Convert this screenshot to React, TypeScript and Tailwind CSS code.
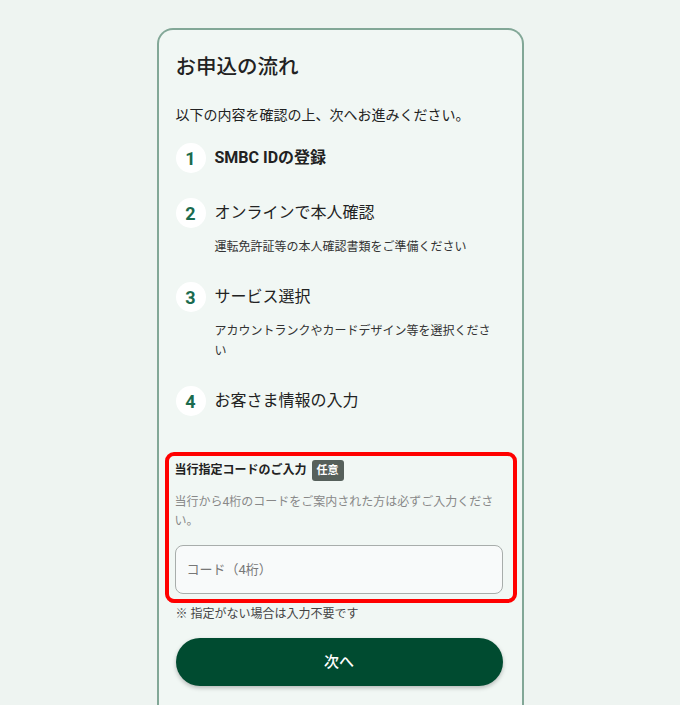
export default function App() {
  const steps = [
    { n: "1", title: "SMBC IDの登録", sub: null as string | null, bold: true },
    { n: "2", title: "オンラインで本人確認", sub: "運転免許証等の本人確認書類をご準備ください", bold: false },
    { n: "3", title: "サービス選択", sub: "アカウントランクやカードデザイン等を選択ください", bold: false },
    { n: "4", title: "お客さま情報の入力", sub: null, bold: false },
  ];

  return (
    <div
      className="min-h-[705px] bg-[#eef4f1] pt-[28px]"
      style={{ fontFamily: 'Roboto, "Noto Sans CJK JP", sans-serif' }}
    >
      <div className="mx-auto w-[367px] h-[700px] rounded-t-[16px] border-2 border-b-0 border-[#82a797] bg-[#f1f7f4] pl-[17px] pr-[19px] pt-[23px]">
        {/* Heading */}
        <h1 className="text-[20.5px] leading-[28px] font-medium text-[#222]">お申込の流れ</h1>
        <p className="mt-[24px] text-[14px] leading-[20px] text-[#222]">
          以下の内容を確認の上、次へお進みください。
        </p>

        {/* Steps */}
        <ol className="mt-[18px] flex flex-col gap-[25px]">
          {steps.map((s) => (
            <li key={s.n} className="flex items-start gap-[9px]">
              <div className="w-[30px] h-[30px] shrink-0 rounded-full bg-white flex items-center justify-center text-[18px] font-bold text-[#1b6b4e]">
                {s.n}
              </div>
              <div className="flex-1">
                <div
                  className={`text-[16px] leading-[30px] text-[#222] ${s.bold ? "font-bold" : "font-normal"}`}
                >
                  {s.title}
                </div>
                {s.sub && (
                  <p className="mt-[9px] pr-[8px] text-[12px] leading-[20px] text-[#333]">{s.sub}</p>
                )}
              </div>
            </li>
          ))}
        </ol>

        {/* Code input (highlighted) */}
        <div className="mt-[36px] ml-[-11px] mr-[-14px] rounded-[9px] border-4 border-[#ff0000] pl-[6px] pr-[10px] pt-[4px] pb-[5px]">
          <div className="flex items-center gap-[5px] h-[20px]">
            <span className="text-[12px] font-bold text-[#222]">当行指定コードのご入力</span>
            <span className="rounded-[3px] bg-[#56605b] px-[5px] h-[21px] leading-[21px] text-[11px] font-bold text-white">
              任意
            </span>
          </div>
          <p className="mt-[13px] text-[12px] leading-[19px] text-[#888]">
            当行から4桁のコードをご案内された方は必ずご入力ください。
          </p>
          <input
            className="mt-[14px] block w-full h-[49px] rounded-[8px] border border-[#a8adab] bg-[#f8fafa] px-[11px] text-[13px] text-[#333] placeholder:text-[#777] outline-none"
            placeholder="コード（4桁）"
          />
        </div>

        <p className="mt-[2px] text-[12px] leading-[18px] text-[#444]">※ 指定がない場合は入力不要です</p>

        <button className="mt-[15px] w-full h-[48px] rounded-full bg-[#004b30] text-[15px] font-medium text-white shadow-[0_2px_4px_rgba(0,0,0,0.25)]">
          次へ
        </button>
      </div>
    </div>
  );
}
